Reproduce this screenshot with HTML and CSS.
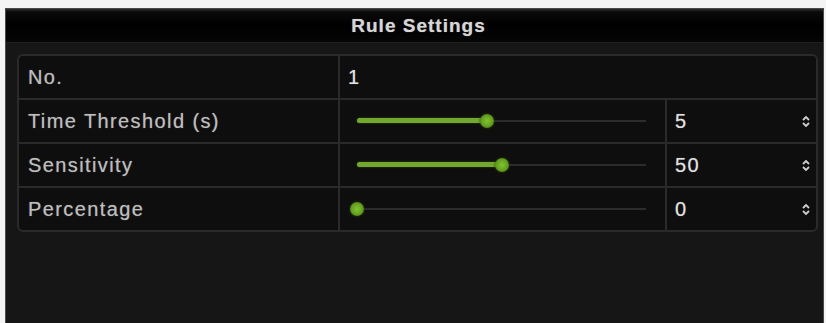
FILE: index.html
```html
<!DOCTYPE html>
<html lang="en">
<head>
    <meta charset="UTF-8">
    <title>Rule Settings</title>
    <link rel="stylesheet" href="styles.css">
</head>
<body>
    <div class="dialog">
        <div class="dialog-title">Rule Settings</div>
        <div class="dialog-body">
            <div class="rule-table">
                <div class="cell label">No.</div>
                <div class="cell value wide">1</div>

                <div class="cell label">Time Threshold (s)</div>
                <div class="cell slider-cell">
                    <div class="slider">
                        <div class="slider-fill" style="width: 45%"></div>
                        <span class="slider-thumb" style="left: 45%"></span>
                    </div>
                </div>
                <div class="cell value spin">
                    <span>5</span>
                    <svg class="spin-icon" width="8" height="13" viewBox="0 0 8 13"><path d="M1 5 L4 2 L7 5 M1 8 L4 11 L7 8" fill="none" stroke="#cfcfcf" stroke-width="1.8"/></svg>
                </div>

                <div class="cell label">Sensitivity</div>
                <div class="cell slider-cell">
                    <div class="slider">
                        <div class="slider-fill" style="width: 50%"></div>
                        <span class="slider-thumb" style="left: 50%"></span>
                    </div>
                </div>
                <div class="cell value spin">
                    <span>50</span>
                    <svg class="spin-icon" width="8" height="13" viewBox="0 0 8 13"><path d="M1 5 L4 2 L7 5 M1 8 L4 11 L7 8" fill="none" stroke="#cfcfcf" stroke-width="1.8"/></svg>
                </div>

                <div class="cell label">Percentage</div>
                <div class="cell slider-cell">
                    <div class="slider">
                        <div class="slider-fill" style="width: 0%"></div>
                        <span class="slider-thumb" style="left: 0%"></span>
                    </div>
                </div>
                <div class="cell value spin">
                    <span>0</span>
                    <svg class="spin-icon" width="8" height="13" viewBox="0 0 8 13"><path d="M1 5 L4 2 L7 5 M1 8 L4 11 L7 8" fill="none" stroke="#cfcfcf" stroke-width="1.8"/></svg>
                </div>
            </div>
        </div>
    </div>
</body>
</html>
```

FILE: styles.css
```css
* {
    margin: 0;
    padding: 0;
    box-sizing: border-box;
}

body {
    background: #f4f4f4;
    font-family: "Liberation Sans", Arial, sans-serif;
    overflow: hidden;
}

.dialog {
    margin: 8px 0 0 5px;
    width: 819px;
    height: 320px;
    border: 1px solid #4a4a4a;
    border-bottom: none;
    background: #161616;
    display: flex;
    flex-direction: column;
}

.dialog-title {
    height: 34px;
    background: linear-gradient(#2c2c2c 0, #0a0a0a 3px, #000 50%, #050505 100%);
    border-bottom: 1px solid #202020;
    color: #d6d6d6;
    font-size: 19px;
    font-weight: bold;
    letter-spacing: 1px;
    display: flex;
    align-items: center;
    justify-content: center;
    padding-left: 8px;
    text-shadow: 0 0 1px #888;
}

.dialog-body {
    flex: 1;
    padding: 11px 5px 0 11px;
}

.rule-table {
    display: grid;
    grid-template-columns: 319px 325px 1fr;
    grid-auto-rows: 42px;
    gap: 2px;
    background: #2a2a2a;
    border: 2px solid #2a2a2a;
    border-radius: 6px;
    overflow: hidden;
}

.cell {
    background: #0e0e0e;
    display: flex;
    align-items: center;
    color: #bdbdbd;
    font-size: 20px;
    letter-spacing: 1.4px;
    text-shadow: 0 0 1px #777;
}

.label {
    padding-left: 9px;
}

.value {
    padding-left: 8px;
    color: #e2e2e2;
}

.value.wide {
    grid-column: span 2;
}

.spin {
    justify-content: space-between;
    padding-right: 6px;
}

.spin-icon {
    display: block;
}

.slider-cell {
    padding: 0 19px 0 17px;
}

.slider {
    position: relative;
    flex: 1;
    height: 2px;
    background: #2c2c2c;
}

.slider-fill {
    position: absolute;
    left: 0;
    top: -2px;
    height: 5px;
    border-radius: 3px;
    background: #73a82e;
    box-shadow: 0 0 2px #3d5e14;
}

.slider-thumb {
    position: absolute;
    top: 1px;
    width: 14px;
    height: 14px;
    margin: -7px 0 0 -7px;
    border-radius: 50%;
    background: radial-gradient(circle at 50% 50%, #80c52e 0, #64a020 55%, #2f4d10 100%);
    box-shadow: 0 0 3px #2a4210;
}
```
